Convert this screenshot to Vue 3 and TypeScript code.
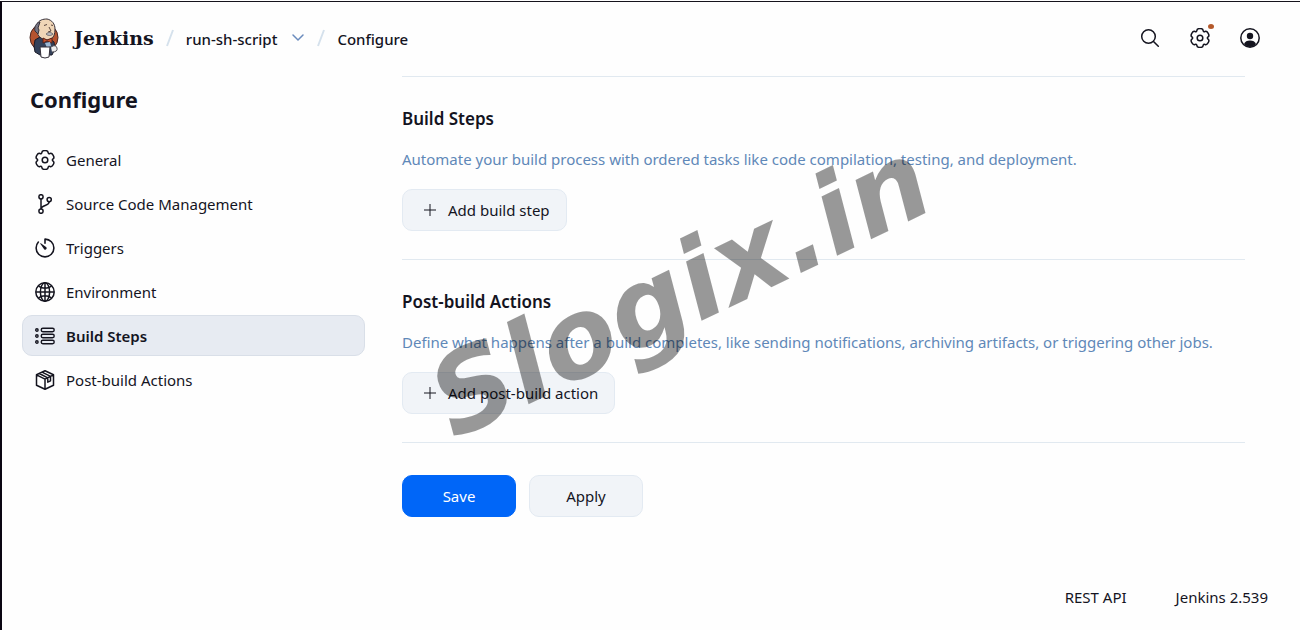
<script setup lang="ts">
import { ref } from 'vue'

interface NavItem {
  id: string
  label: string
}

const items: NavItem[] = [
  { id: 'general', label: 'General' },
  { id: 'scm', label: 'Source Code Management' },
  { id: 'triggers', label: 'Triggers' },
  { id: 'environment', label: 'Environment' },
  { id: 'steps', label: 'Build Steps' },
  { id: 'post', label: 'Post-build Actions' },
]

const sections = [
  {
    id: 'build-steps',
    title: 'Build Steps',
    text: 'Automate your build process with ordered tasks like code compilation, testing, and deployment.',
    action: 'Add build step',
  },
  {
    id: 'post-build-actions',
    title: 'Post-build Actions',
    text: 'Define what happens after a build completes, like sending notifications, archiving artifacts, or triggering other jobs.',
    action: 'Add post-build action',
  },
]

const active = ref('steps')

// Six-toothed gear outline, rounded by joining edge midpoints with quadratic curves.
function gearPath(cx: number, cy: number, tip: number, valley: number): string {
  const pts: [number, number][] = []
  for (let k = 0; k < 6; k++) {
    const steps: [number, number][] = [[-17, tip], [17, tip], [30, valley]]
    for (const [offset, r] of steps) {
      const a = ((k * 60 + offset - 90) * Math.PI) / 180
      pts.push([cx + r * Math.cos(a), cy + r * Math.sin(a)])
    }
  }
  const mid = (i: number) => {
    const p = pts[i % pts.length]
    const q = pts[(i + 1) % pts.length]
    return `${((p[0] + q[0]) / 2).toFixed(2)} ${((p[1] + q[1]) / 2).toFixed(2)}`
  }
  let d = `M${mid(pts.length - 1)}`
  pts.forEach((p, i) => {
    d += `Q${p[0].toFixed(2)} ${p[1].toFixed(2)} ${mid(i)}`
  })
  return d + 'z'
}

const gear = gearPath(10, 10, 9.9, 6.6)
</script>

<template>
  <div class="page">
    <header class="topbar">
      <nav class="crumbs" aria-label="Breadcrumb">
        <a class="brand" href="#home">
          <svg class="butler" viewBox="0 0 30 41" aria-hidden="true">
            <ellipse cx="15" cy="19.5" rx="14" ry="14" fill="#b5532f" stroke="#4b2a24" />
            <path d="M6 22l5-3 5 3 4-2 5 4 1 7-3 6H11l-5-3-1-6z" fill="#33415a" stroke="#1b1b28" />
            <path d="M8 6C10 2 14 1 18 1c5 1 8 5 8 10 0 5-1 8-4 10-3 2-7 1-10-1-3-2-4-5-4-8z" fill="#f0d6b7" stroke="#35303a" />
            <path d="M11 4C7 5 5 9 6 13l3 3 1-4-1-2z" fill="#767685" stroke="#35303a" />
            <path d="M15 7.500l3-1m4 .5l2 .5M20 9l2 4-3 1" fill="none" stroke="#5b4740" />
            <path d="M17 16c2-2 5-2 7 0-2 2-5 2-7 0z" fill="#b9b9bd" stroke="#6d6a6d" />
            <path d="M14 20l4 2 5-2v5l-5-2-4 2z" fill="#c8502a" stroke="#5a241b" />
            <path d="M16 25l5-1 1 4-4 2z" fill="#9db8d3" />
            <path d="M11 29h10l-1 10q-4 2-8 0z" fill="#fff" stroke="#35303a" />
            <path d="M22 29q5-3 6 1 1 4-5 4" fill="#eee" stroke="#57555c" />
          </svg>
          <span>Jenkins</span>
        </a>
        <svg class="slash" viewBox="0 0 8 18" aria-hidden="true"><path d="M7 1L1 17" /></svg>
        <a class="crumb" href="#job">run-sh-script</a>
        <button class="bare chevron" type="button" aria-label="Job menu">
          <svg viewBox="0 0 14 14"><path d="M2 4l5 5 5-5" /></svg>
        </button>
        <svg class="slash" viewBox="0 0 8 18" aria-hidden="true"><path d="M7 1L1 17" /></svg>
        <a class="crumb" href="#configure" aria-current="page">Configure</a>
      </nav>
      <div class="tools">
        <button class="bare" type="button" aria-label="Search">
          <svg class="icon" viewBox="0 0 20 20" fill="none" stroke="currentColor" stroke-width="1.5">
            <circle cx="8.500" cy="8.500" r="6.800" /><path d="M13.500 13.500l4.800 4.800" stroke-linecap="round" />
          </svg>
        </button>
        <button class="bare" type="button" aria-label="Manage Jenkins">
          <svg class="icon" viewBox="0 0 20 20" fill="none" stroke="currentColor" stroke-width="1.500">
            <path :d="gear" /><circle cx="10" cy="10" r="2.800" />
          </svg>
          <span class="dot"></span>
        </button>
        <button class="bare" type="button" aria-label="Account">
          <svg class="icon" viewBox="0 0 20 20">
            <circle cx="10" cy="10" r="9.200" fill="none" stroke="currentColor" stroke-width="1.500" />
            <circle cx="10" cy="8" r="3.200" fill="currentColor" />
            <path d="M4 16c1-2.500 3-3.500 6-3.500s5 1 6 3.500c-3.500 4-8.500 4-12 0z" fill="currentColor" />
          </svg>
        </button>
      </div>
    </header>

    <div class="body">
      <aside class="side">
        <h1>Configure</h1>
        <nav class="menu" aria-label="Configure sections">
          <a
            v-for="item in items"
            :key="item.id"
            :href="'#' + item.id"
            :class="['entry', { active: active === item.id }]"
            @click.prevent="active = item.id"
          >
            <svg v-if="item.id === 'general'" class="icon" viewBox="0 0 20 20" fill="none" stroke="currentColor" stroke-width="1.500">
              <path :d="gear" /><circle cx="10" cy="10" r="2.800" />
            </svg>
            <svg v-else-if="item.id === 'scm'" class="icon" viewBox="0 0 20 20" fill="none" stroke="currentColor" stroke-width="1.500">
              <circle cx="6" cy="2.800" r="2.100" /><circle cx="6" cy="17.200" r="2.100" /><circle cx="14.200" cy="5.600" r="2.100" />
              <path d="M6 5v10M14.200 7.700c0 4.500-7.500 3-8.200 7.300" />
            </svg>
            <svg v-else-if="item.id === 'triggers'" class="icon" viewBox="40 40 432 432" fill="none" stroke="currentColor" stroke-width="34" stroke-linecap="round">
              <path d="M112.910 128A191.850 191.850 0 0064 254c-1.180 106.350 85.650 193.800 192 194 106.200.2 192-85.830 192-192 0-104.540-83.550-189.610-187.500-192a4.360 4.360 0 00-4.500 4.370V152" />
              <path d="M233.380 278.630l-79-113a8.130 8.130 0 0111.320-11.320l113 79a32.500 32.500 0 01-37.250 53.260 33.210 33.210 0 01-8.070-7.940z" fill="currentColor" stroke="none" />
            </svg>
            <svg v-else-if="item.id === 'environment'" class="icon" viewBox="0 0 20 20" fill="none" stroke="currentColor" stroke-width="1.500">
              <circle cx="10" cy="10" r="9.200" /><ellipse cx="10" cy="10" rx="4.600" ry="9.200" />
              <path d="M10 1v18M1 10h18M3.500 4.200c4 2.600 9 2.600 13 0M3.500 15.800c4-2.600 9-2.600 13 0" />
            </svg>
            <svg v-else-if="item.id === 'steps'" class="icon" viewBox="0 0 20 20" fill="none" stroke="currentColor" stroke-width="1.400">
              <circle cx="1.900" cy="4" r="1.200" /><circle cx="1.900" cy="10" r="1.200" /><circle cx="1.900" cy="16" r="1.200" />
              <rect x="6.200" y="2.300" width="13" height="3.400" rx="1.700" />
              <rect x="6.200" y="8.300" width="13" height="3.400" rx="1.700" />
              <rect x="6.200" y="14.300" width="13" height="3.400" rx="1.700" />
            </svg>
            <svg v-else class="icon" viewBox="0 0 20 20" fill="none" stroke="currentColor" stroke-width="1.500" stroke-linejoin="round">
              <path d="M10 .8l8.500 4v10.400L10 19.200l-8.500-4V4.800zM1.500 4.800L10 9.200l8.500-4.400M10 9.200v10M4.300 3.500l8.500 4.300v4.400l2.700-1.400V6.400L7 2.200" />
            </svg>
            <span>{{ item.label }}</span>
          </a>
        </nav>
      </aside>

      <main class="content">
        <section v-for="s in sections" :key="s.id" class="section">
          <h2>{{ s.title }}</h2>
          <p>{{ s.text }}</p>
          <button class="btn add" type="button">
            <svg class="plus" viewBox="0 0 14 14" aria-hidden="true"><path d="M7 1v12M1 7h12" /></svg>
            <span>{{ s.action }}</span>
          </button>
        </section>
        <div class="actions">
          <button class="btn primary" type="submit">Save</button>
          <button class="btn" type="button">Apply</button>
        </div>
      </main>
    </div>

    <footer class="footer">
      <a href="#api">REST API</a>
      <a href="#version">Jenkins 2.539</a>
    </footer>

    <div class="watermark" aria-hidden="true">Slogix.in</div>
  </div>
</template>

<style>
body {
  background: #fefefe;
}
</style>

<style scoped>
.page {
  position: relative;
  display: flex;
  flex-direction: column;
  box-sizing: border-box;
  min-height: calc(100vh - 1px);
  margin-top: 1px;
  border-top: 1px solid #15131c;
  border-left: 2px solid #0b0612;
  overflow: hidden;
  background: #fefefe;
  color: #14141f;
  font-family: "Noto Sans", "Open Sans", sans-serif;
  font-size: 15px;
  line-height: 20px;
}
a {
  color: inherit;
  text-decoration: none;
}
button {
  font: inherit;
  color: inherit;
  cursor: pointer;
}
.icon {
  display: block;
  flex: none;
  width: 20px;
  height: 20px;
}
.topbar {
  display: flex;
  justify-content: space-between;
  align-items: center;
  height: 72px;
  padding: 0 40px 0 27px;
}
.crumbs {
  display: flex;
  align-items: center;
}
.brand {
  display: flex;
  align-items: center;
  gap: 15px;
  font-family: "DejaVu Serif", serif;
  font-weight: bold;
  font-size: 19px;
}
.butler {
  width: 30px;
  height: 41px;
}
.slash {
  width: 8px;
  height: 18px;
  margin: 0 12px;
  fill: none;
  stroke: #d5e1ec;
  stroke-width: 2;
}
.crumb {
  padding-top: 2px;
  font-weight: 500;
}
.bare {
  position: relative;
  display: block;
  padding: 0;
  border: 0;
  background: none;
}
.chevron {
  margin-left: 14px;
}
.chevron svg {
  display: block;
  width: 14px;
  height: 14px;
  fill: none;
  stroke: #6a8bbd;
  stroke-width: 1.5;
  stroke-linecap: round;
}
.tools {
  display: flex;
  gap: 30px;
}
.dot {
  position: absolute;
  top: -4px;
  right: -4px;
  width: 6px;
  height: 5px;
  border-radius: 50%;
  background: #b4592b;
}
.body {
  display: flex;
  gap: 37px;
  padding: 2px 55px 0 20px;
}
.side {
  flex: none;
  width: 343px;
}
h1 {
  margin: 7px 0 24px 8px;
  font-size: 22px;
  line-height: 32px;
  font-weight: 700;
}
.menu {
  display: flex;
  flex-direction: column;
  gap: 3px;
}
.entry {
  display: flex;
  align-items: center;
  gap: 11px;
  box-sizing: border-box;
  height: 41px;
  padding: 0 12px;
  border: 1px solid transparent;
  border-radius: 10px;
}
.entry.active {
  border-color: #d9dfe8;
  background: #e7ebf2;
  font-weight: 600;
}
.content {
  flex: 1;
  min-width: 0;
}
.section {
  padding: 32px 0 28px;
  border-top: 1px solid #e1e9f0;
}
h2 {
  margin: 0 0 20px;
  font-size: 17px;
  line-height: 20px;
  font-weight: 600;
}
p {
  margin: 0 0 20px;
  color: #6088b8;
}
.btn {
  box-sizing: border-box;
  height: 42px;
  min-width: 114px;
  padding: 0 16px;
  border: 1px solid #e3eaf2;
  border-radius: 10px;
  background: #f1f4f8;
}
.btn.add {
  display: flex;
  align-items: center;
  gap: 11px;
  padding-left: 20px;
}
.plus {
  width: 14px;
  height: 14px;
  fill: none;
  stroke: currentColor;
  stroke-width: 1;
}
.actions {
  display: flex;
  gap: 13px;
  padding-top: 32px;
  border-top: 1px solid #e1e9f0;
}
.btn.primary {
  border-color: #0066f8;
  background: #0066f8;
  color: #fff;
}
.footer {
  display: flex;
  justify-content: flex-end;
  gap: 49px;
  margin-top: auto;
  padding: 0 32px 23px;
}
.watermark {
  position: absolute;
  left: 452px;
  top: 345px;
  color: rgba(0, 0, 0, 0.4);
  font: italic bold 110px/110px "DejaVu Sans", sans-serif;
  transform: rotate(-25.7deg);
  transform-origin: 0 93px;
  pointer-events: none;
}
</style>
